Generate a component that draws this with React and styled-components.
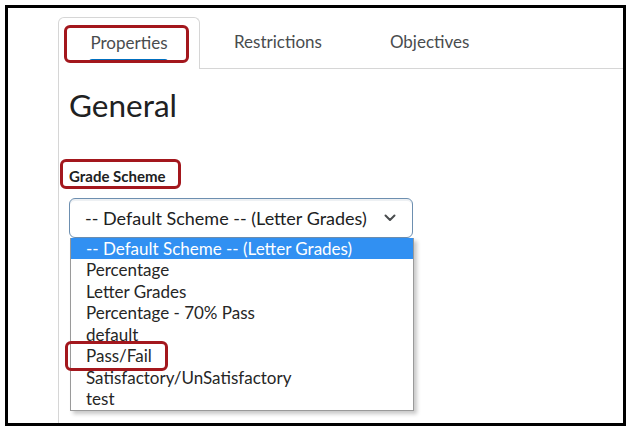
import React from "react";
import styled, { createGlobalStyle } from "styled-components";

const GlobalStyle = createGlobalStyle`
  html, body {
    margin: 0;
    background: #ffffff;
  }
  body {
    font-family: Lato, "Open Sans", "Liberation Sans", sans-serif;
  }
`;

const Page = styled.div`
  padding: 5px;
  width: 632px;
  height: 435px;
  box-sizing: border-box;
`;

const Frame = styled.div`
  width: 621px;
  height: 421px;
  box-sizing: border-box;
  border: 3px solid #000;
  padding: 9px 0 0 50px;
  display: flex;
  flex-direction: column;
  overflow: hidden;
`;

const TabBar = styled.div`
  display: flex;
  align-items: stretch;
  height: 52px;
`;

const Tab = styled.div`
  position: relative;
  display: flex;
  align-items: center;
  justify-content: center;
  padding: 0 34px 2px;
  font-size: 17px;
  color: #494c4e;
  box-sizing: border-box;
  border-bottom: 1px solid #d6d6d6;
  white-space: nowrap;
  ${(p) =>
    p.$active &&
    `
    width: 142px;
    padding: 0 0 3px;
    border: 1px solid #d6d6d6;
    border-bottom: none;
    border-radius: 6px 6px 0 0;
  `}
`;

const TabUnderline = styled.span`
  position: absolute;
  left: 30px;
  bottom: 6px;
  width: 79px;
  height: 4px;
  border-radius: 3px 3px 0 0;
  background: #006fbf;
`;

const TabFiller = styled.div`
  flex: 1;
  border-bottom: 1px solid #d6d6d6;
`;

const Callout = styled.span`
  position: absolute;
  border: 3px solid #a3171d;
  border-radius: 6px;
  box-sizing: border-box;
  pointer-events: none;
`;

const Body = styled.div`
  flex: 1;
  border-left: 1px solid #d6d6d6;
  padding: 18px 0 0 10px;
`;

const Heading = styled.h1`
  margin: 0;
  font-size: 31.5px;
  font-weight: 400;
  line-height: 1.2;
  color: #202122;
`;

const Label = styled.div`
  position: relative;
  margin-top: 42px;
  font-size: 15px;
  font-weight: 700;
  line-height: 18px;
  color: #202122;
`;

const SelectWrap = styled.div`
  position: relative;
  margin-top: 13px;
  width: 344px;
`;

const SelectBox = styled.div`
  height: 40px;
  box-sizing: border-box;
  border: 1px solid #6d8fb0;
  border-radius: 6px;
  padding: 0 16px 0 15px;
  display: flex;
  align-items: center;
  justify-content: space-between;
  font-size: 18px;
  color: #202122;
  box-shadow: inset 0 2px 0 rgba(185, 194, 208, 0.25);
`;

const Dropdown = styled.ul`
  position: absolute;
  left: 1px;
  top: 40px;
  width: 344px;
  margin: 0;
  padding: 0;
  list-style: none;
  box-sizing: border-box;
  background: #fff;
  border: 1px solid #9a9a9a;
  border-top: none;
  box-shadow: 3px 3px 4px rgba(0, 0, 0, 0.22);
`;

const Option = styled.li`
  height: 21.5px;
  line-height: 21.5px;
  padding-left: 15px;
  font-size: 17px;
  color: ${(p) => (p.$selected ? "#ffffff" : "#262626")};
  background: ${(p) => (p.$selected ? "#3190f2" : "transparent")};
  white-space: nowrap;
`;

const Chevron = () => (
  <svg width="12" height="8" viewBox="0 0 12 8" fill="none">
    <path
      d="M1.5 1.5 L6 6 L10.5 1.5"
      stroke="#494c4e"
      strokeWidth="2"
      strokeLinecap="round"
      strokeLinejoin="round"
    />
  </svg>
);

const options = [
  "-- Default Scheme -- (Letter Grades)",
  "Percentage",
  "Letter Grades",
  "Percentage - 70% Pass",
  "default",
  "Pass/Fail",
  "Satisfactory/UnSatisfactory",
  "test",
];

export default function App() {
  return (
    <>
      <GlobalStyle />
      <Page>
        <Frame>
          <TabBar>
            <Tab $active>
              Properties
              <TabUnderline />
              <Callout style={{ left: 5, top: 7, width: 125, height: 38 }} />
            </Tab>
            <Tab>Restrictions</Tab>
            <Tab>Objectives</Tab>
            <TabFiller />
          </TabBar>
          <Body>
            <Heading>General</Heading>
            <Label>
              Grade Scheme
              <Callout style={{ left: -9, top: -8, width: 121, height: 30 }} />
            </Label>
            <SelectWrap>
              <SelectBox>
                <span>-- Default Scheme -- (Letter Grades)</span>
                <Chevron />
              </SelectBox>
              <Dropdown>
                {options.map((o, i) => (
                  <Option key={o} $selected={i === 0}>
                    {o}
                  </Option>
                ))}
                <Callout style={{ left: -6, top: 103, width: 103, height: 30 }} />
              </Dropdown>
            </SelectWrap>
          </Body>
        </Frame>
      </Page>
    </>
  );
}
